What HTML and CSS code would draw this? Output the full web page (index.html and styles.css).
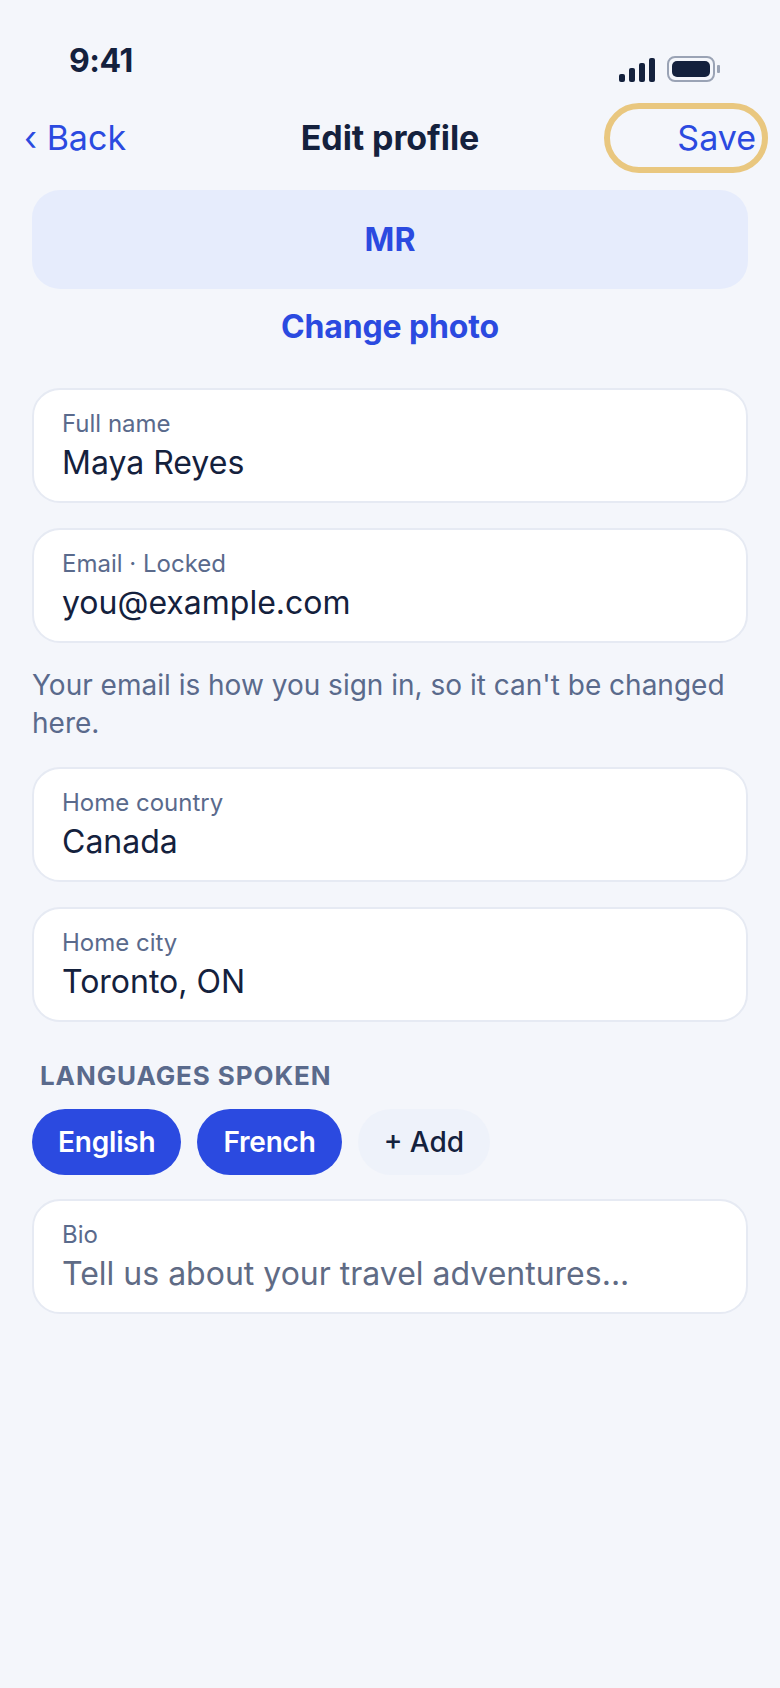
FILE: index.html

```html
<!DOCTYPE html>
<html lang="en">
<head>
  <meta charset="UTF-8">
  <title>Edit profile</title>
  <link rel="stylesheet" href="styles.css">
</head>
<body>
  <div class="status">
    <span class="time">9:41</span>
    <div class="status-icons">
      <div class="signal">
        <i class="b1"></i><i class="b2"></i><i class="b3"></i><i class="b4"></i>
      </div>
      <div class="battery"><div class="charge"></div></div>
      <div class="nub"></div>
    </div>
  </div>

  <div class="nav">
    <a class="back">&lsaquo; Back</a>
    <h1>Edit profile</h1>
    <button class="save">Save</button>
  </div>

  <div class="content">
    <div class="avatar">MR</div>
    <a class="change-photo">Change photo</a>

    <div class="field">
      <label>Full name</label>
      <div class="value">Maya Reyes</div>
    </div>
    <div class="field">
      <label>Email · Locked</label>
      <div class="value">you@example.com</div>
    </div>
    <p class="helper">Your email is how you sign in, so it can't be changed here.</p>
    <div class="field">
      <label>Home country</label>
      <div class="value">Canada</div>
    </div>
    <div class="field">
      <label>Home city</label>
      <div class="value">Toronto, ON</div>
    </div>

    <h2>Languages spoken</h2>
    <div class="chips">
      <span class="chip on">English</span>
      <span class="chip on">French</span>
      <span class="chip">+ Add</span>
    </div>

    <div class="field">
      <label>Bio</label>
      <div class="value empty">Tell us about your travel adventures...</div>
    </div>
  </div>
</body>
</html>
```

FILE: styles.css

```css
* {
  box-sizing: border-box;
}
body {
  margin: 0;
  height: 1688px;
  overflow: hidden;
  font-family: Inter, "Noto Sans", sans-serif;
  background-color: #f4f6fb;
  color: #14213d;
}

/* status bar */
.status {
  display: flex;
  justify-content: space-between;
  height: 102px;
  padding: 41px 60px 0 69px;
}
.time {
  font-size: 32px;
  font-weight: 700;
  line-height: 40px;
  letter-spacing: -0.5px;
}
.status-icons {
  display: flex;
  align-items: center;
  height: 26px;
  margin-top: 15px;
}
.signal {
  display: flex;
  align-items: flex-end;
  gap: 4px;
  height: 24px;
  margin: 1px 12px 0 0;
}
.signal i {
  display: block;
  width: 6px;
  background: #14213d;
  border-radius: 2px;
}
.b1 { height: 8px; }
.b2 { height: 14px; }
.b3 { height: 19px; }
.b4 { height: 24px; }
.battery {
  width: 48px;
  height: 26px;
  padding: 3px;
  border: 2px solid #9aa3b5;
  border-radius: 8px;
}
.charge {
  height: 100%;
  background: #14213d;
  border-radius: 5px;
}
.nub {
  width: 3px;
  height: 8px;
  margin-left: 2px;
  background: #9aa3b5;
  border-radius: 1px;
}

/* nav */
.nav {
  display: flex;
  align-items: center;
  justify-content: space-between;
  height: 70px;
  margin-bottom: 1px;
  padding: 0 18px 0 24px;
  font-size: 34px;
}
.back {
  width: 146px;
  color: #2b4ae0;
}
.nav h1 {
  margin: 0;
  font-size: 34px;
  font-weight: 700;
  letter-spacing: -0.1px;
}
.save {
  width: 152px;
  height: 58px;
  margin-top: 2px;
  padding: 0 6px 2px 0;
  border: 0;
  border-radius: 29px;
  outline: 6px solid #e9c77f;
  background: none;
  color: #2b4ae0;
  font: inherit;
  text-align: right;
}

/* form */
.content {
  display: flex;
  flex-direction: column;
  padding: 17px 32px 0;
}
.avatar {
  display: flex;
  align-items: center;
  justify-content: center;
  height: 99px;
  border-radius: 28px;
  background: #e6ecfc;
  color: #2b4ae0;
  font-size: 32px;
  font-weight: 700;
}
.change-photo {
  margin: 18px 0 41px;
  color: #2b4ae0;
  font-size: 32px;
  font-weight: 700;
  line-height: 40px;
  letter-spacing: -0.15px;
  text-align: center;
}
.field {
  height: 115px;
  margin-bottom: 25px;
  padding: 17px 28px 0;
  border: 2px solid #e6eaf3;
  border-radius: 28px;
  background: white;
}
.field label {
  display: block;
  color: #5a6a8c;
  font-size: 24px;
  line-height: 34px;
}
.value {
  font-size: 32px;
  line-height: 44px;
}
.value.empty {
  color: #5f6b85;
}
.helper {
  margin: -2px 0 25px;
  color: #5a6a8c;
  font-size: 28px;
  line-height: 38px;
}
h2 {
  margin: 13px 0 17px 8px;
  color: #5a6a8c;
  font-size: 26px;
  font-weight: 700;
  line-height: 32px;
  letter-spacing: 0.9px;
  text-transform: uppercase;
}
.chips {
  display: flex;
  gap: 16px;
  margin-bottom: 24px;
}
.chip {
  height: 66px;
  padding: 0 26px;
  border-radius: 33px;
  background: #eef2fa;
  font-size: 28px;
  font-weight: 500;
  line-height: 66px;
}
.chip.on {
  background: #2b4ae0;
  color: white;
  font-weight: 600;
  letter-spacing: -0.2px;
}
```
